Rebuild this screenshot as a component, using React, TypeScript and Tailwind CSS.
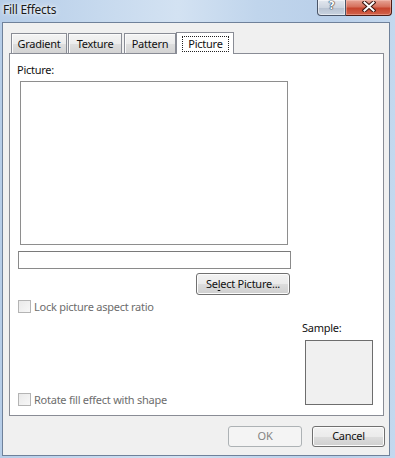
import React from "react";

function Checkbox({ label }: { label: string }) {
  return (
    <div className="flex items-center h-[13px]">
      <div className="w-[13px] h-[13px] border border-[#b4b4b4] bg-[linear-gradient(135deg,#e9e9e9_0%,#f7f7f7_100%)] shrink-0" />
      <span className="ml-[3px] leading-[16px] text-[#6d6d6d] whitespace-nowrap">{label}</span>
    </div>
  );
}

const btnBg =
  "bg-[linear-gradient(180deg,#f2f2f2_0%,#ebebeb_50%,#dddddd_51%,#cfcfcf_100%)] shadow-[inset_0_0_0_1px_#fcfcfc]";

export default function App() {
  return (
    <div className="w-[395px] h-[458px] flex flex-col overflow-hidden font-['Noto_Sans',sans-serif] text-[11px] tracking-[-0.25px] text-[#111] bg-[linear-gradient(90deg,#b6cde8_0%,#c6d9ee_25%,#d3e2f2_45%,#c0d5ec_65%,#b9cfe9_85%,#c4d8ee_100%)]">
      {/* title bar */}
      <div className="h-[22px] shrink-0 flex items-start pl-[3px] pr-[3px]">
        <span className="mt-[2px] leading-[16px] text-[12px] text-[#1b1b1b] [text-shadow:0_0_6px_#ffffff,0_0_3px_#ffffff]">
          Fill Effects
        </span>
        <div className="ml-auto flex h-[16px]">
          <div className="w-[29px] h-[16px] border border-t-0 border-[#4a5568] rounded-bl-[4px] bg-[linear-gradient(180deg,#e3e8ef_0%,#cdd5e0_50%,#b7c2d1_51%,#c9d3e0_100%)] flex items-start justify-center shadow-[inset_0_0_0_1px_rgba(255,255,255,0.5)]">
            <span className="font-['DejaVu_Sans',sans-serif] font-bold text-[11px] leading-[12px] text-white [text-shadow:0_0_1px_#1f2a3a,0_0_1px_#1f2a3a,0_0_1px_#1f2a3a]">
              ?
            </span>
          </div>
          <div className="w-[46px] h-[16px] border border-t-0 border-l-0 border-[#4e1c14] rounded-br-[4px] bg-[linear-gradient(180deg,#e7a597_0%,#d6705c_45%,#c6442d_55%,#d2634b_100%)] flex items-start justify-center shadow-[inset_0_0_0_1px_rgba(255,210,200,0.4)]">
            <svg width="14" height="11" viewBox="0 0 14 11" className="mt-[1px]">
              <path d="M2.5 1.5 L11.5 9.5 M11.5 1.5 L2.5 9.5" stroke="#3a1510" strokeWidth="4" strokeLinecap="square" fill="none" />
              <path d="M2.5 1.5 L11.5 9.5 M11.5 1.5 L2.5 9.5" stroke="#ffffff" strokeWidth="2" strokeLinecap="square" fill="none" />
            </svg>
          </div>
        </div>
      </div>

      {/* client area */}
      <div className="flex-1 ml-[2px] mr-[5px] mb-[2px] border border-[#6f819a] bg-[#f0f0f0] flex flex-col">
        {/* tabs */}
        <div className="relative z-10 mt-[8px] ml-[8px] h-[22px] flex items-end">
          <div className="w-[56px] h-[20px] border border-b-0 border-[#898c95] flex items-center justify-center pt-[1px] bg-[linear-gradient(180deg,#f4f4f4_0%,#ececec_50%,#dfdfdf_51%,#d3d3d3_100%)] shadow-[inset_1px_1px_0_#fbfbfb]">
            Gradient
          </div>
          <div className="ml-[1px] w-[54px] h-[20px] border border-b-0 border-[#898c95] flex items-center justify-center pt-[1px] bg-[linear-gradient(180deg,#f4f4f4_0%,#ececec_50%,#dfdfdf_51%,#d3d3d3_100%)] shadow-[inset_1px_1px_0_#fbfbfb]">
            Texture
          </div>
          <div className="ml-[2px] w-[52px] h-[20px] border border-b-0 border-[#898c95] flex items-center justify-center pt-[1px] bg-[linear-gradient(180deg,#f4f4f4_0%,#ececec_50%,#dfdfdf_51%,#d3d3d3_100%)] shadow-[inset_1px_1px_0_#fbfbfb]">
            Pattern
          </div>
          <div className="w-[58px] h-[22px] -mb-px border border-b-0 border-[#898c95] bg-white flex flex-col">
            <div className="mt-[3px] ml-[5px] w-[47px] h-[16px] border border-dotted border-[#222] flex items-center justify-center">
              Picture
            </div>
          </div>
        </div>

        {/* panel */}
        <div className="ml-[6px] w-[375px] h-[363px] border border-[#898c95] bg-white flex flex-col">
          <div className="ml-[7px] mt-[8px] leading-[16px] h-[16px]">Picture:</div>
          <div className="ml-[10px] mt-[3px] w-[268px] h-[164px] border border-[#8e8e8e] bg-white" />
          <div className="ml-[8px] mt-[6px] w-[273px] h-[18px] border border-[#8a8a8a] border-t-[#7a7a7a] bg-white" />
          <div className={"ml-[186px] mt-[4px] w-[94px] h-[22px] border border-[#707070] rounded-[3px] flex items-center justify-center " + btnBg}>
            <span className="leading-[16px]">
              Se<span className="underline underline-offset-[2px]">l</span>ect Picture...
            </span>
          </div>
          <div className="ml-[8px] mt-[5px]">
            <Checkbox label="Lock picture aspect ratio" />
          </div>
          <div className="mt-[7px] flex items-end">
            <div className="ml-[8px] -mb-px">
              <Checkbox label="Rotate fill effect with shape" />
            </div>
            <div className="ml-auto mr-[10px] flex flex-col items-start">
              <div className="leading-[16px] h-[16px]">Sample:</div>
              <div className="ml-[3px] mt-[4px] w-[68px] h-[65px] border border-[#6d6d6d] bg-[#f0f0f0]" />
            </div>
          </div>
        </div>

        {/* bottom buttons */}
        <div className="mt-[10px] flex justify-end pr-[4px] gap-[10px]">
          <div className="w-[74px] h-[21px] border border-[#adb2b5] rounded-[3px] bg-[#f4f4f4] flex items-center justify-center text-[#838383]">
            OK
          </div>
          <div className={"w-[73px] h-[21px] border border-[#707070] rounded-[3px] flex items-center justify-center " + btnBg}>
            Cancel
          </div>
        </div>
      </div>
    </div>
  );
}
